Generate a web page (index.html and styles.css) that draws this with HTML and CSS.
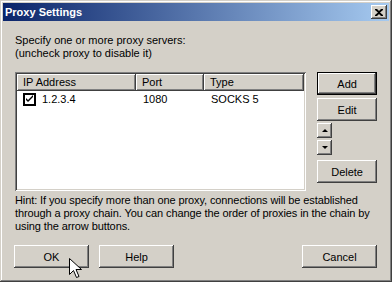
FILE: index.html
```html
<!DOCTYPE html>
<html lang="en">
<head>
  <meta charset="UTF-8" />
  <title>Proxy Settings</title>
  <link rel="stylesheet" href="styles.css">
</head>
<body>

  <div class="window">
    <div class="titlebar">
      <span class="title">Proxy Settings</span>
      <button class="close-btn">
        <svg width="8" height="7" viewBox="0 0 8 7"><path d="M0 0h2l2 2 2-2h2v1L5 3.5 8 6v1H6L4 5 2 7H0V6l3-2.5L0 1z" fill="#000"/></svg>
      </button>
    </div>

    <div class="content">
      <p class="intro">Specify one or more proxy servers:<br>(uncheck proxy to disable it)</p>

      <div class="middle">
        <div class="list">
          <div class="list-head">
            <div class="col-head">IP Address</div>
            <div class="col-head">Port</div>
            <div class="col-head">Type</div>
          </div>
          <div class="list-row">
            <div class="cell first"><span class="checkbox"><svg width="9" height="9" viewBox="0 0 9 9"><path d="M1 3l2 2 5-5v2L3 7 1 5z" fill="#000"/></svg></span>1.2.3.4</div>
            <div class="cell">1080</div>
            <div class="cell">SOCKS 5</div>
          </div>
        </div>

        <div class="side">
          <button class="btn default">Add</button>
          <button class="btn edit">Edit</button>
          <button class="btn arrow up"><span class="tri-up"></span></button>
          <button class="btn arrow down"><span class="tri-down"></span></button>
          <button class="btn delete">Delete</button>
        </div>
      </div>

      <p class="hint">Hint: If you specify more than one proxy, connections will be established<br>through a proxy chain. You can change the order of proxies in the chain by<br>using the arrow buttons.</p>

      <div class="footer">
        <button class="btn wide ok">OK</button>
        <button class="btn wide">Help</button>
        <button class="btn wide cancel">Cancel</button>
      </div>
    </div>

    <svg class="cursor" width="13" height="21" viewBox="0 0 13 21"><path d="M0.5 0.5v16l4-4 3 7 2.5-1-3-7h5.5z" fill="#fff" stroke="#000"/></svg>
  </div>

</body>
</html>
```

FILE: styles.css
```css
* {
  box-sizing: border-box;
}
body {
  margin: 0;
  font-family: "Liberation Sans", Arial, sans-serif;
  font-size: 11px;
  color: #000;
}
.window {
  position: relative;
  width: 392px;
  height: 282px;
  padding: 3px;
  background: #d4d0c8;
  box-shadow: inset -1px -1px #404040, inset 1px 1px #d4d0c8,
              inset -2px -2px #808080, inset 2px 2px #fff;
}
.titlebar {
  height: 18px;
  display: flex;
  align-items: center;
  justify-content: space-between;
  padding: 0 2px 0 2px;
  background: linear-gradient(to right, #0a246a, #a6caf0);
}
.title {
  color: #fff;
  font-weight: bold;
  font-size: 11px;
}
.close-btn {
  width: 16px;
  height: 14px;
  padding: 0;
  border: none;
  display: flex;
  align-items: center;
  justify-content: center;
  background: #d4d0c8;
  box-shadow: inset -1px -1px #404040, inset 1px 1px #fff,
              inset -2px -2px #808080, inset 2px 2px #d4d0c8;
}
.content {
  padding: 13px 12px 0 12px;
  display: flex;
  flex-direction: column;
}
p {
  margin: 0;
  line-height: 13px;
}
.middle {
  display: flex;
  gap: 11px;
  margin-top: 12px;
}
.list {
  width: 292px;
  height: 119px;
  padding: 2px;
  background: #fff;
  box-shadow: inset 1px 1px #808080, inset -1px -1px #fff,
              inset 2px 2px #404040, inset -2px -2px #d4d0c8;
}
.list-head, .list-row {
  display: grid;
  grid-template-columns: 119px 68px 1fr;
}
.col-head {
  height: 17px;
  line-height: 17px;
  padding-left: 6px;
  background: #d4d0c8;
  box-shadow: inset -1px -1px #404040, inset 1px 1px #fff,
              inset -2px -2px #808080;
}
.list-row {
  height: 17px;
}
.cell {
  line-height: 17px;
  padding-left: 7px;
}
.cell.first {
  display: flex;
  align-items: center;
  padding-left: 6px;
}
.checkbox {
  width: 13px;
  height: 13px;
  margin-right: 6px;
  border: 2px solid #000;
  display: flex;
  align-items: center;
  justify-content: center;
  background: #fff;
}
.side {
  width: 60px;
  display: flex;
  flex-direction: column;
}
.btn {
  font-family: inherit;
  font-size: 11px;
  color: #000;
  padding: 0;
  border: none;
  background: #d4d0c8;
  height: 23px;
  box-shadow: inset -1px -1px #404040, inset 1px 1px #fff,
              inset -2px -2px #808080, inset 2px 2px #d4d0c8;
}
.btn.default {
  border: 1px solid #000;
}
.edit {
  margin-top: 3px;
}
.arrow {
  width: 15px;
  height: 15px;
  margin-top: 2px;
  display: flex;
  align-items: center;
  justify-content: center;
}
.tri-up, .tri-down {
  width: 0;
  height: 0;
  border-left: 3px solid transparent;
  border-right: 3px solid transparent;
}
.tri-up {
  border-bottom: 3px solid #000;
}
.tri-down {
  border-top: 3px solid #000;
}
.delete {
  margin-top: 5px;
}
.hint {
  margin-top: 3px;
  white-space: nowrap;
  letter-spacing: -0.1px;
}
.footer {
  display: flex;
  gap: 10px;
  margin-top: 12px;
  margin-left: -1px;
}
.btn.wide {
  width: 75px;
}
.cancel {
  margin-left: auto;
}
.cursor {
  position: absolute;
  left: 69px;
  top: 258px;
}
```
